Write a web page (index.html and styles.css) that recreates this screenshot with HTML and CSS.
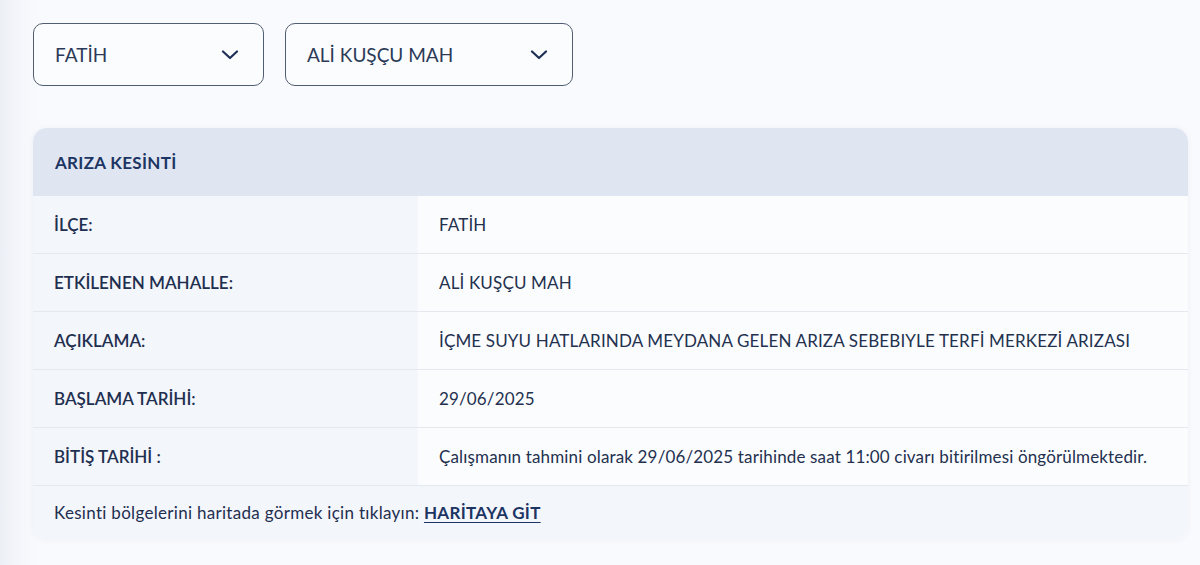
FILE: index.html
```html
<!DOCTYPE html>
<html lang="tr">
<head>
  <meta charset="UTF-8" />
  <meta name="viewport" content="width=device-width, initial-scale=1.0" />
  <title>Arıza Kesinti</title>
  <link rel="stylesheet" href="styles.css">
</head>
<body>
  <div class="page">
    <div class="filters">
      <div class="select select-ilce">
        <span>FATİH</span>
        <svg class="chevron" width="18" height="10" viewBox="0 0 18 10"><path d="M2 1.5 L9 8 L16 1.5" fill="none" stroke="#1e2f55" stroke-width="2.2" stroke-linecap="round" stroke-linejoin="round"/></svg>
      </div>
      <div class="select select-mahalle">
        <span>ALİ KUŞÇU MAH</span>
        <svg class="chevron" width="18" height="10" viewBox="0 0 18 10"><path d="M2 1.5 L9 8 L16 1.5" fill="none" stroke="#1e2f55" stroke-width="2.2" stroke-linecap="round" stroke-linejoin="round"/></svg>
      </div>
    </div>

    <div class="card">
      <div class="card-header">ARIZA KESİNTİ</div>
      <div class="row">
        <div class="label">İLÇE:</div>
        <div class="value">FATİH</div>
      </div>
      <div class="row">
        <div class="label">ETKİLENEN MAHALLE:</div>
        <div class="value">ALİ KUŞÇU MAH</div>
      </div>
      <div class="row">
        <div class="label">AÇIKLAMA:</div>
        <div class="value">İÇME SUYU HATLARINDA MEYDANA GELEN ARIZA SEBEBIYLE TERFİ MERKEZİ ARIZASI</div>
      </div>
      <div class="row">
        <div class="label">BAŞLAMA TARİHİ:</div>
        <div class="value">29/06/2025</div>
      </div>
      <div class="row">
        <div class="label">BİTİŞ TARİHİ :</div>
        <div class="value">Çalışmanın tahmini olarak 29/06/2025 tarihinde saat 11:00 civarı bitirilmesi öngörülmektedir.</div>
      </div>
      <div class="card-footer">Kesinti bölgelerini haritada görmek için tıklayın: <a href="#">HARİTAYA GİT</a></div>
    </div>
  </div>
</body>
</html>
```

FILE: styles.css
```css
body {
  margin: 0;
  font-family: Lato, "Open Sans", sans-serif;
  color: #23314f;
  background: linear-gradient(to right, #eceff5 0px, #f5f7fb 22px, #f9fafd 40px);
  min-height: 565px;
}
.page {
  padding: 23px 12px 20px 33px;
}
.filters {
  display: flex;
  gap: 21px;
}
.select {
  display: flex;
  align-items: center;
  justify-content: space-between;
  box-sizing: border-box;
  height: 63px;
  padding: 0 24px 0 21px;
  border: 1.5px solid #515d70;
  border-radius: 10px;
  background-color: #fbfcfe;
  font-size: 19px;
  color: #2b3a57;
}
.select-ilce {
  width: 231px;
}
.select-mahalle {
  width: 288px;
}
.card {
  margin-top: 42px;
  width: 1155px;
  border-radius: 14px;
  overflow: hidden;
  background-color: #fbfcfe;
  box-shadow: 0 0 6px rgba(30, 50, 90, 0.05);
}
.card-header {
  height: 68px;
  display: flex;
  align-items: center;
  padding-left: 22px;
  background-color: #dfe6f2;
  font-size: 17px;
  font-weight: bold;
  letter-spacing: 0.3px;
  color: #1c3563;
}
.row {
  display: flex;
  height: 58px;
  border-bottom: 1px solid #e4e8ef;
  box-sizing: border-box;
}
.label {
  width: 385px;
  display: flex;
  align-items: center;
  padding-left: 21px;
  box-sizing: border-box;
  background-color: #f3f6fb;
  font-size: 17px;
  font-weight: 600;
  color: #1f2f4f;
}
.value {
  flex: 1;
  display: flex;
  align-items: center;
  padding-left: 21px;
  font-size: 17px;
  letter-spacing: 0.15px;
  color: #23314f;
}
.card-footer {
  height: 54px;
  line-height: 54px;
  padding-left: 21px;
  background-color: #f3f6fb;
  font-size: 17px;
  letter-spacing: 0.3px;
  color: #1f2f4f;
}
.card-footer a {
  font-weight: bold;
  color: #1c3563;
  text-decoration: underline;
  text-underline-offset: 3px;
}
```
